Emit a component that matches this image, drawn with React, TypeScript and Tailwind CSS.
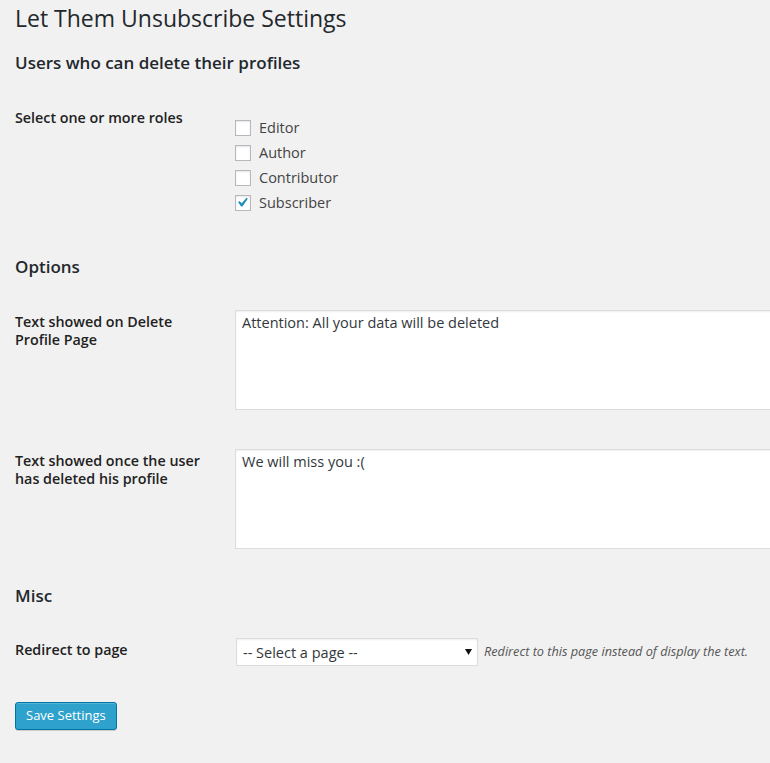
import { useState } from 'react';

const ROLES = [
  { id: 'editor', nombre: 'Editor', marcado: false },
  { id: 'author', nombre: 'Author', marcado: false },
  { id: 'contributor', nombre: 'Contributor', marcado: false },
  { id: 'subscriber', nombre: 'Subscriber', marcado: true },
];

export default function App() {
  const [roles, setRoles] = useState(ROLES);
  const [textoBorrar, setTextoBorrar] = useState('Attention: All your data will be deleted');
  const [textoFinal, setTextoFinal] = useState('We will miss you :(');

  const toggle = (id: string) =>
    setRoles(rs => rs.map(r => (r.id === id ? { ...r, marcado: !r.marcado } : r)));

  return (
    <div className="w-full min-h-[763px] overflow-hidden bg-[#f1f1f1] px-[15px] pt-[4px] font-['Open_Sans',sans-serif] text-[#444]">
      <h1 className="text-[23px] leading-[29px] font-normal text-[#23282d] whitespace-nowrap">Let Them Unsubscribe Settings</h1>

      <h2 className="mt-[18px] text-[17px] leading-[24px] font-semibold text-[#23282d]">Users who can delete their profiles</h2>
      <div className="flex">
        <div className="w-[220px] shrink-0 pt-[34px] text-[14.3px] leading-[18px] font-semibold text-[#222]">
          Select one or more roles
        </div>
        <div className="pt-[40px] flex flex-col">
          {roles.map(r => (
            <label key={r.id} className="h-[25px] flex items-center gap-[8px] text-[14.5px] cursor-pointer">
              <span
                onClick={() => toggle(r.id)}
                className="w-[16px] h-[16px] shrink-0 border border-[#b4b9be] bg-white shadow-[inset_0_1px_2px_rgba(0,0,0,0.1)] flex items-center justify-center"
              >
                {r.marcado && (
                  <svg width="14" height="14" viewBox="3.5 3 15 15">
                    <path d="M14.83 4.89l1.34.94-5.81 8.38H9.02L5.78 9.67l1.34-1.25 2.57 2.4z" fill="#1e8cbe" />
                  </svg>
                )}
              </span>
              <span>{r.nombre}</span>
            </label>
          ))}
        </div>
      </div>

      <h2 className="mt-[40px] text-[17px] leading-[24px] font-semibold text-[#23282d]">Options</h2>
      <div className="flex mt-[31px]">
        <div className="w-[220px] shrink-0 pt-[3px] text-[14.3px] leading-[18px] font-semibold text-[#222]">
          Text showed on Delete<br />Profile Page
        </div>
        <textarea
          value={textoBorrar}
          onChange={e => setTextoBorrar(e.target.value)}
          className="w-[600px] shrink-0 h-[100px] resize-none border border-[#ddd] bg-white px-[6px] pt-[3px] text-[14.5px] leading-[18px] text-[#32373c] shadow-[inset_0_1px_2px_rgba(0,0,0,0.07)] outline-none"
        />
      </div>

      <div className="flex mt-[39px]">
        <div className="w-[220px] shrink-0 pt-[3px] text-[14.3px] leading-[18px] font-semibold text-[#222]">
          Text showed once the user<br />has deleted his profile
        </div>
        <textarea
          value={textoFinal}
          onChange={e => setTextoFinal(e.target.value)}
          className="w-[600px] shrink-0 h-[100px] resize-none border border-[#ddd] bg-white px-[6px] pt-[3px] text-[14.5px] leading-[18px] text-[#32373c] shadow-[inset_0_1px_2px_rgba(0,0,0,0.07)] outline-none"
        />
      </div>

      <h2 className="mt-[35px] text-[17px] leading-[24px] font-semibold text-[#23282d]">Misc</h2>
      <div className="flex mt-[30px]">
        <div className="w-[221px] shrink-0 pt-[3px] text-[14.3px] leading-[18px] font-semibold text-[#222]">
          Redirect to page
        </div>
        <div className="flex items-center gap-[6px]">
          <div className="relative w-[242px] h-[28px]">
            <select className="w-full h-full appearance-none border border-[#ddd] bg-white pl-[6px] pr-[20px] pt-[2px] text-[14.5px] text-[#32373c] shadow-[inset_0_1px_2px_rgba(0,0,0,0.07)] outline-none">
              <option>-- Select a page --</option>
            </select>
            <svg className="absolute right-[6px] top-[11px] pointer-events-none" width="7" height="6" viewBox="0 0 7 6">
              <path d="M0 0h7L3.5 6z" fill="#111" />
            </svg>
          </div>
          <span className="text-[12.7px] italic text-[#555]">Redirect to this page instead of display the text.</span>
        </div>
      </div>

      <button className="mt-[36px] h-[28px] px-[10px] rounded-[3px] border border-[#0074a2] bg-[#2ea2cc] text-[13px] text-white shadow-[inset_0_1px_0_rgba(120,200,230,0.5),0_1px_0_rgba(0,0,0,0.15)]">
        Save Settings
      </button>
    </div>
  );
}
